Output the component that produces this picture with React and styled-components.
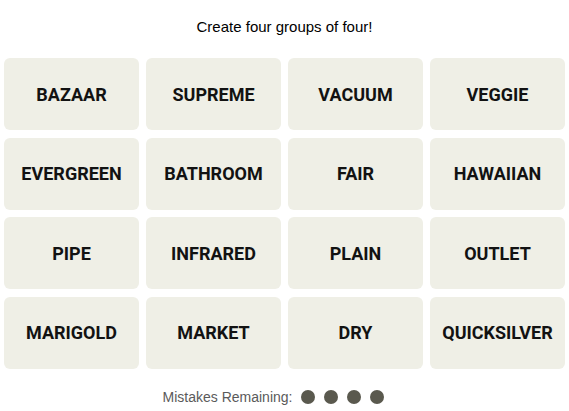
import React from "react";
import styled, { createGlobalStyle } from "styled-components";

const GlobalStyle = createGlobalStyle`
  body {
    margin: 0;
    background: #ffffff;
    font-family: "Liberation Sans", Arial, sans-serif;
  }
`;

const Page = styled.div`
  width: 569px;
  padding: 0 4px;
  box-sizing: border-box;
  display: flex;
  flex-direction: column;
  align-items: center;
`;

const Title = styled.p`
  margin: 17px 0 0;
  height: 20px;
  line-height: 20px;
  font-size: 15px;
  color: #000;
`;

const Board = styled.div`
  margin-top: 21px;
  width: 100%;
  display: grid;
  grid-template-columns: repeat(4, 1fr);
  grid-auto-rows: 72px;
  column-gap: 7px;
  row-gap: 7.5px;
`;

const Tile = styled.button`
  border: none;
  border-radius: 6px;
  background: #efefe6;
  color: #121212;
  font-family: Roboto, "Liberation Sans", sans-serif;
  font-weight: 700;
  font-size: 18px;
  text-transform: uppercase;
  display: flex;
  align-items: center;
  justify-content: center;
  padding: 0;
  cursor: pointer;
`;

const Footer = styled.div`
  margin-top: 20px;
  margin-right: 22px;
  display: flex;
  align-items: center;
  gap: 9px;
  font-size: 14px;
  color: #5a5a5a;
`;

const Dots = styled.div`
  display: flex;
  gap: 9px;
`;

const Dot = styled.span`
  width: 14px;
  height: 14px;
  border-radius: 50%;
  background: #5a594e;
`;

const words = [
  "Bazaar", "Supreme", "Vacuum", "Veggie",
  "Evergreen", "Bathroom", "Fair", "Hawaiian",
  "Pipe", "Infrared", "Plain", "Outlet",
  "Marigold", "Market", "Dry", "Quicksilver",
];

export default function App() {
  return (
    <Page>
      <GlobalStyle />
      <Title>Create four groups of four!</Title>
      <Board>
        {words.map((w) => (
          <Tile key={w}>{w}</Tile>
        ))}
      </Board>
      <Footer>
        Mistakes Remaining:
        <Dots>
          {[0, 1, 2, 3].map((i) => (
            <Dot key={i} />
          ))}
        </Dots>
      </Footer>
    </Page>
  );
}
